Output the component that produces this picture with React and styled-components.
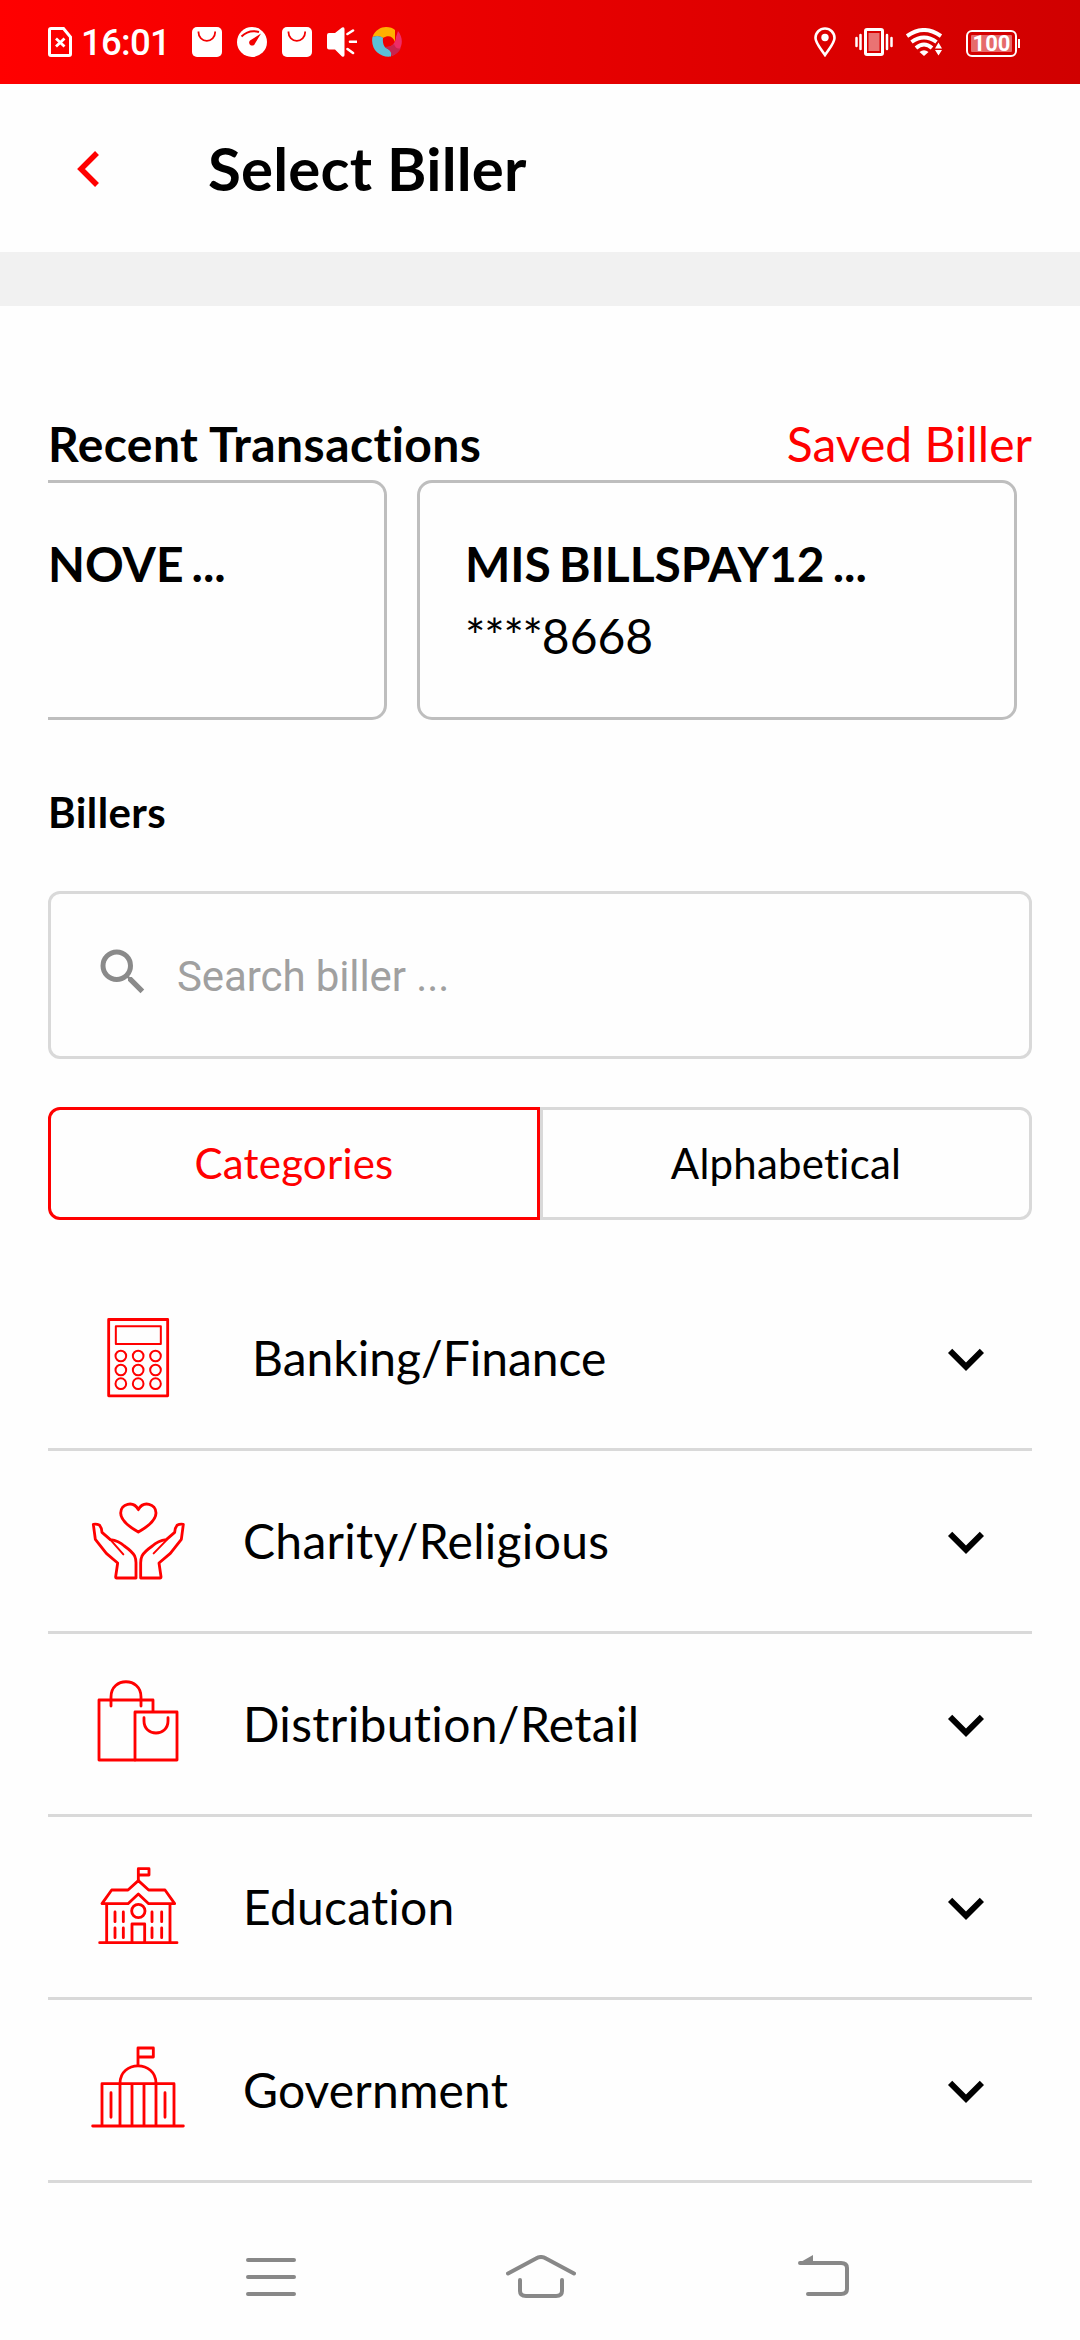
import React from "react";
import styled, { createGlobalStyle } from "styled-components";

const GlobalStyle = createGlobalStyle`
  * { box-sizing: border-box; }
  body { margin: 0; background: #fefefe; }
`;

const RED = "#ff0000";

const Screen = styled.div`
  display: flex;
  flex-direction: column;
  width: 1080px;
  height: 2340px;
  overflow: hidden;
  background: #fefefe;
  color: #000;
  font-family: Lato, "Liberation Sans", sans-serif;
  font-variant-ligatures: none;
`;

const StatusBar = styled.header`
  display: flex;
  align-items: center;
  justify-content: space-between;
  height: 84px;
  padding: 0 60px 0 48px;
  background: linear-gradient(90deg, #ff0000, #d00000);
  color: #fff;
`;

const StatusGroup = styled.div`
  display: flex;
  align-items: center;
`;

const StatusIcon = styled.svg`
  display: block;
  flex: none;
  margin-left: ${(p) => p.$gap || 0}px;
`;

const Clock = styled.span`
  width: 87px;
  margin: 2px 0 0 9px;
  font: 500 36.500px/40px Roboto, sans-serif;
  letter-spacing: -0.7px;
  white-space: nowrap;
`;

const Battery = styled.div`
  display: flex;
  align-items: center;
  height: 27px;
  margin: 3px 0 0 24px;
`;

const BatteryShell = styled.div`
  width: 51px;
  height: 27px;
  padding: 3px;
  border: 2px solid #fff;
  border-radius: 6px;
`;

const BatteryLevel = styled.div`
  height: 17px;
  border-radius: 1px;
  background: rgba(255, 255, 255, 0.42);
  font: 700 22px/18px Roboto, sans-serif;
  text-align: center;
`;

const BatteryTip = styled.div`
  width: 2px;
  height: 9px;
  margin-left: 1px;
  background: #fff;
`;

const TitleBar = styled.div`
  display: flex;
  align-items: center;
  height: 168px;
  padding-left: 77px;
`;

const BackIcon = styled.svg`
  display: block;
  width: 23px;
  height: 38px;
  margin-top: 2px;
`;

const Title = styled.h1`
  margin: 0 0 0 108px;
  font-size: 60px;
  font-weight: 700;
  line-height: 72px;
  letter-spacing: 0.2px;
`;

const Strip = styled.div`
  height: 54px;
  background: #f1f1f1;
`;

const Content = styled.main`
  display: flex;
  flex-direction: column;
  height: 1877px;
  padding: 109px 48px 0;
`;

const SectionHead = styled.div`
  display: flex;
  justify-content: space-between;
  height: 65px;
  font-size: 48px;
  line-height: 58px;
`;

const Heading = styled.h2`
  margin: 0;
  font-size: ${(p) => p.$size}px;
  font-weight: 700;
  line-height: ${(p) => p.$line}px;
  letter-spacing: 0.42px;
`;

const SavedLink = styled.a`
  color: ${RED};
`;

const Recents = styled.div`
  display: flex;
  gap: 30px;
  height: 240px;
  overflow: hidden;
`;

const RecentCard = styled.article`
  flex: none;
  width: ${(p) => (p.$cut ? 339 : 600)}px;
  height: 240px;
  padding: ${(p) => (p.$cut ? "52px 0 0 0" : "52px 45px 0")};
  border: 3px solid #bebebe;
  border-left-width: ${(p) => (p.$cut ? 0 : 3)}px;
  border-radius: ${(p) => (p.$cut ? "0 15px 15px 0" : "15px")};
  font-size: 48px;
  line-height: 58px;
`;

const CardName = styled.div`
  font-weight: 700;
  letter-spacing: -0.03px;
  word-spacing: -3.500px;
  white-space: nowrap;
`;

const CardNumber = styled.div`
  margin-top: 14px;
`;

const Mask = styled.span`
  letter-spacing: -1.200px;
`;

const BillersHead = styled.div`
  height: 171px;
  padding-top: 67px;
`;

const SearchBox = styled.div`
  display: flex;
  align-items: center;
  height: 168px;
  padding-left: 42px;
  border: 3px solid #d9d9d9;
  border-radius: 12px;
`;

const SearchIcon = styled.svg`
  display: block;
  width: 60px;
  height: 60px;
  margin-top: -7px;
`;

const Placeholder = styled.span`
  margin: 3px 0 0 24px;
  color: #a0a0a0;
  font: 400 42px/50px Roboto, sans-serif;
  letter-spacing: -0.1px;
`;

const Tabs = styled.div`
  display: grid;
  grid-template-columns: 1fr 1fr;
  height: 113px;
  margin-top: 48px;
`;

const Tab = styled.button`
  margin: 0;
  padding: 0 0 2px;
  background: none;
  border: 3px solid ${(p) => (p.$active ? RED : "#d9d9d9")};
  border-radius: ${(p) => (p.$active ? "12px 0 0 12px" : "0 12px 12px 0")};
  color: ${(p) => (p.$active ? RED : "#000")};
  font: inherit;
  font-size: 42px;
  font-variant-ligatures: none;
  letter-spacing: 0.22px;
`;

const Categories = styled.ul`
  margin: 48px 0 0;
  padding: 0;
  list-style: none;
`;

const Category = styled.li`
  display: flex;
  align-items: center;
  height: 183px;
  padding: 0 30px 0 44px;
  border-bottom: 3px solid #d9d9d9;
  font-size: 48px;
  line-height: 58px;
`;

const CategoryIcon = styled.svg`
  display: block;
  flex: none;
  width: 92px;
  height: 92px;
  overflow: visible;
  fill: none;
  stroke: ${RED};
  stroke-width: 8.500;
  stroke-linecap: round;
  stroke-linejoin: round;
`;

const CategoryName = styled.span`
  flex: 1;
  margin-left: ${(p) => (p.$wide ? 68 : 59)}px;
  letter-spacing: ${(p) => p.$tracking}px;
`;

const Chevron = styled.svg`
  display: block;
  width: 72px;
  height: 72px;
  margin-top: 2px;
`;

const NavBar = styled.nav`
  display: flex;
  align-items: center;
  height: 157px;
  padding: 31px 0 0 246px;
`;

const NavIcon = styled.svg`
  display: block;
  margin-left: ${(p) => p.$gap || 0}px;
  fill: none;
  stroke: #888;
  stroke-width: 4;
  stroke-linecap: round;
  stroke-linejoin: round;
`;

function Bag({ gap }) {
  return (
    <StatusIcon $gap={gap} width="30" height="30" viewBox="0 0 30 30">
      <rect width="30" height="30" rx="5" fill="#fff" />
      <path d="M6.5 4.5v1a8.300 8.300 0 0 0 16.600 0v-1" fill="none" stroke="#f40000" strokeWidth="1.800" />
    </StatusIcon>
  );
}

function CalculatorArt() {
  return (
    <CategoryIcon viewBox="156 66 276 276">
      <rect x="206" y="88.500" width="177" height="229" />
      <rect x="227.500" y="109" width="135" height="53" strokeWidth="6" />
      {[198, 240, 281].map((y) =>
        [242.500, 294.500, 346.500].map((x) => <circle key={`${x}-${y}`} cx={x} cy={y} r="16" strokeWidth="6" />)
      )}
    </CategoryIcon>
  );
}

function CharityArt() {
  const hand =
    "M160 163Q170 161 179 166Q185 173 186 187L211 209Q236 212 253 228Q277 245 284 258Q288 267 288 278V324H230Q227 324 227 320L233 279L199 250L166 208Z";
  return (
    <CategoryIcon viewBox="156 75 276 276">
      <path d="M295 186C272 173 242 151 242 129C242 101 280 91 295 119C310 91 348 101 348 129C348 151 318 173 295 186Z" />
      <path d={hand} />
      <path d="M211 209L250 253" strokeWidth="6" />
      <g transform="translate(590 0) scale(-1 1)">
        <path d={hand} />
        <path d="M211 211L249 250" strokeWidth="6" />
      </g>
    </CategoryIcon>
  );
}

function ShoppingArt() {
  return (
    <CategoryIcon viewBox="156 84 276 276">
      <path d="M339 185V150H177V330H285" />
      <path d="M213 168V141C213 80 303 80 303 141V168" />
      <rect x="285" y="186" width="126" height="144" />
      <path d="M312 203V213C312 261 384 261 384 213V203" />
    </CategoryIcon>
  );
}

function SchoolArt() {
  return (
    <CategoryIcon viewBox="156 93 276 276">
      <path d="M295 150V116H327V135H295" />
      <path d="M295 152L264 180H215L186 221H264L295 192L326 221H404L375 180H326Z" />
      <circle cx="295" cy="243" r="20" />
      <path d="M200 224V338M390 224V338M179 338H411M276 338V282H314V338" />
      <path d="M225 246V275M225 294V323M250 246V275M250 294V323M336 246V275M336 294V323M365 246V275M365 294V323" />
    </CategoryIcon>
  );
}

function CapitolArt() {
  return (
    <CategoryIcon viewBox="156 72 276 276">
      <path d="M294 136V84H340V111H294" />
      <path d="M240 190C240 120 348 120 348 190" />
      <path d="M186 318V191H402V318M240 191V318M276 191V318M312 191V318M348 191V318M158 318H430" />
      <path d="M213 218V292M375 218V292" />
    </CategoryIcon>
  );
}

const categories = [
  { name: "Banking/Finance", Art: CalculatorArt, wide: true, tracking: 0 },
  { name: "Charity/Religious", Art: CharityArt, tracking: 0.28 },
  { name: "Distribution/Retail", Art: ShoppingArt, tracking: 0.33 },
  { name: "Education", Art: SchoolArt, tracking: 0.22 },
  { name: "Government", Art: CapitolArt, tracking: 0.15 },
];

export default function App() {
  return (
    <>
      <GlobalStyle />
      <Screen>
        <StatusBar>
          <StatusGroup>
            <StatusIcon width="24" height="30" viewBox="0 0 24 30">
              <path d="M3 1.500H15.500L22.500 10V27Q22.500 28.500 21 28.500H3Q1.500 28.500 1.500 27V3Q1.500 1.500 3 1.500Z" fill="none" stroke="#fff" strokeWidth="3" />
              <path d="M8 11.500L16.500 19.500M16.500 11.500L8 19.500" stroke="#fff" strokeWidth="2.800" />
            </StatusIcon>
            <Clock>16:01</Clock>
            <Bag gap={24} />
            <StatusIcon $gap={15} width="30" height="30" viewBox="0 0 30 30">
              <circle cx="15" cy="15" r="15" fill="#fff" />
              <path d="M4.500 9.500Q12 2 22 5" fill="none" stroke="#f20000" strokeWidth="2" />
              <path d="M24 6.500L18 16.500A3 3 0 1 1 13 13.500Z" fill="#f20000" />
            </StatusIcon>
            <Bag gap={15} />
            <StatusIcon $gap={15} width="30" height="30" viewBox="0 0 30 30">
              <path d="M2 6H8L15 .5Q17.500-.5 17.500 2V28Q17.500 30.500 15 29.500L8 22.500H2Q0 22.500 0 20.500V8Q0 6 2 6Z" fill="#fff" />
              <path d="M20.500 7L26 3.500M23 14.700H29.500M20.500 22L26 26" stroke="#fff" strokeWidth="2.600" strokeLinecap="round" />
            </StatusIcon>
            <StatusIcon $gap={15} width="30" height="30" viewBox="0 0 30 30">
              <path d="M.5 10C3 3 9 0 14 0C18 0 21 1 23 3V15C21 9 16 8 11 11C7 8 3 9 .5 10Z" fill="#ffb000" />
              <path d="M.5 10C5 8 9 9 11 11C10 19 14 23 20 23L19 29.500C8 31-2 22 .5 10Z" fill="#5cc0d8" />
              <path d="M26 4C33 13 30 24 20 29C20 25 18 22 13 20C20 21 24 15 24 10Z" fill="#ee2c68" />
              <path d="M22 17Q24 23 29 21Q26 27 20 29Q19 23 13 20Q19 20 22 17Z" fill="#c9244f" />
            </StatusIcon>
          </StatusGroup>
          <StatusGroup>
            <StatusIcon width="22" height="30" viewBox="0 0 22 30">
              <path d="M11 28C7 22 1.500 16 1.500 11A9.500 9.500 0 0 1 20.500 11C20.500 16 15 22 11 28Z" fill="none" stroke="#fff" strokeWidth="2.600" />
              <circle cx="11" cy="10.500" r="3.700" fill="#fff" />
            </StatusIcon>
            <StatusIcon $gap={19} width="38" height="28" viewBox="0 0 38 28">
              <rect x="10.500" y="1.500" width="17" height="25" rx="1.500" fill="none" stroke="#fff" strokeWidth="3" />
              <rect x="13.500" y="5" width="11" height="18" fill="#fff" opacity=".45" />
              <path d="M1.500 10V18M5.500 7V21M32 7V21M36.500 10V18" stroke="#fff" strokeWidth="2.500" strokeLinecap="round" />
            </StatusIcon>
            <StatusIcon $gap={13} width="36" height="28" viewBox="0 0 36 28">
              <g fill="none" stroke="#fff" strokeWidth="4">
                <path d="M1 8Q18-4 35 8" />
                <path d="M5.500 14Q18 5 30.500 14" />
                <path d="M10 20Q18 13 26 20" />
              </g>
              <path d="M13.500 24Q18 20.500 22.500 24L18 28Z" fill="#fff" />
              <path d="M29 20.500L32.500 14.500L36 20.500ZM29 22L32.500 27.500L36 22Z" fill="#fff" />
            </StatusIcon>
            <Battery>
              <BatteryShell>
                <BatteryLevel>100</BatteryLevel>
              </BatteryShell>
              <BatteryTip />
            </Battery>
          </StatusGroup>
        </StatusBar>

        <TitleBar>
          <BackIcon viewBox="0 0 23 38">
            <path d="M20 3L4 19L20 35" fill="none" stroke={RED} strokeWidth="5.500" />
          </BackIcon>
          <Title>Select Biller</Title>
        </TitleBar>
        <Strip />

        <Content>
          <SectionHead>
            <Heading $size={48} $line={58}>Recent Transactions</Heading>
            <SavedLink>Saved Biller</SavedLink>
          </SectionHead>
          <Recents>
            <RecentCard $cut>
              <CardName>NOVE ...</CardName>
            </RecentCard>
            <RecentCard>
              <CardName>MIS BILLSPAY12 ...</CardName>
              <CardNumber>
                <Mask>****</Mask>8668
              </CardNumber>
            </RecentCard>
          </Recents>
          <BillersHead>
            <Heading $size={42} $line={50}>Billers</Heading>
          </BillersHead>
          <SearchBox>
            <SearchIcon viewBox="0 0 24 24">
              <path
                d="M15.500 14h-.79l-.28-.27A6.471 6.471 0 0 0 16 9.500 6.500 6.500 0 1 0 9.500 16c1.610 0 3.090-.59 4.230-1.570l.27.28v.79l5 4.990L20.490 19l-4.990-5zm-6 0C7.010 14 5 11.990 5 9.500S7.010 5 9.500 5 14 7.010 14 9.500 11.990 14 9.500 14z"
                fill="#8a8a8a"
              />
            </SearchIcon>
            <Placeholder>Search biller ...</Placeholder>
          </SearchBox>
          <Tabs>
            <Tab $active>Categories</Tab>
            <Tab>Alphabetical</Tab>
          </Tabs>
          <Categories>
            {categories.map(({ name, Art, wide, tracking }) => (
              <Category key={name}>
                <Art />
                <CategoryName $wide={wide} $tracking={tracking}>{name}</CategoryName>
                <Chevron viewBox="0 0 24 24">
                  <path d="M16.590 8.590L12 13.170 7.410 8.590 6 10l6 6 6-6z" />
                </Chevron>
              </Category>
            ))}
          </Categories>
        </Content>

        <NavBar>
          <NavIcon width="50" height="44" viewBox="0 0 50 44">
            <path d="M2 5H48M2 22H48M2 39H48" />
          </NavIcon>
          <NavIcon $gap={210} width="70" height="44" viewBox="0 0 70 44">
            <path d="M2 18.500L30 3.500Q35 .5 40 3.500L68 18.500" />
            <path d="M14 25V36Q14 41 20 41H50Q56 41 56 36V25" />
          </NavIcon>
          <NavIcon $gap={222} width="52" height="44" viewBox="0 0 52 44">
            <path d="M2 8H43Q49 8 49 13V34Q49 39 43 39H10" />
            <path d="M1 8L15 0V8Z" fill="#888" stroke="none" />
          </NavIcon>
        </NavBar>
      </Screen>
    </>
  );
}
